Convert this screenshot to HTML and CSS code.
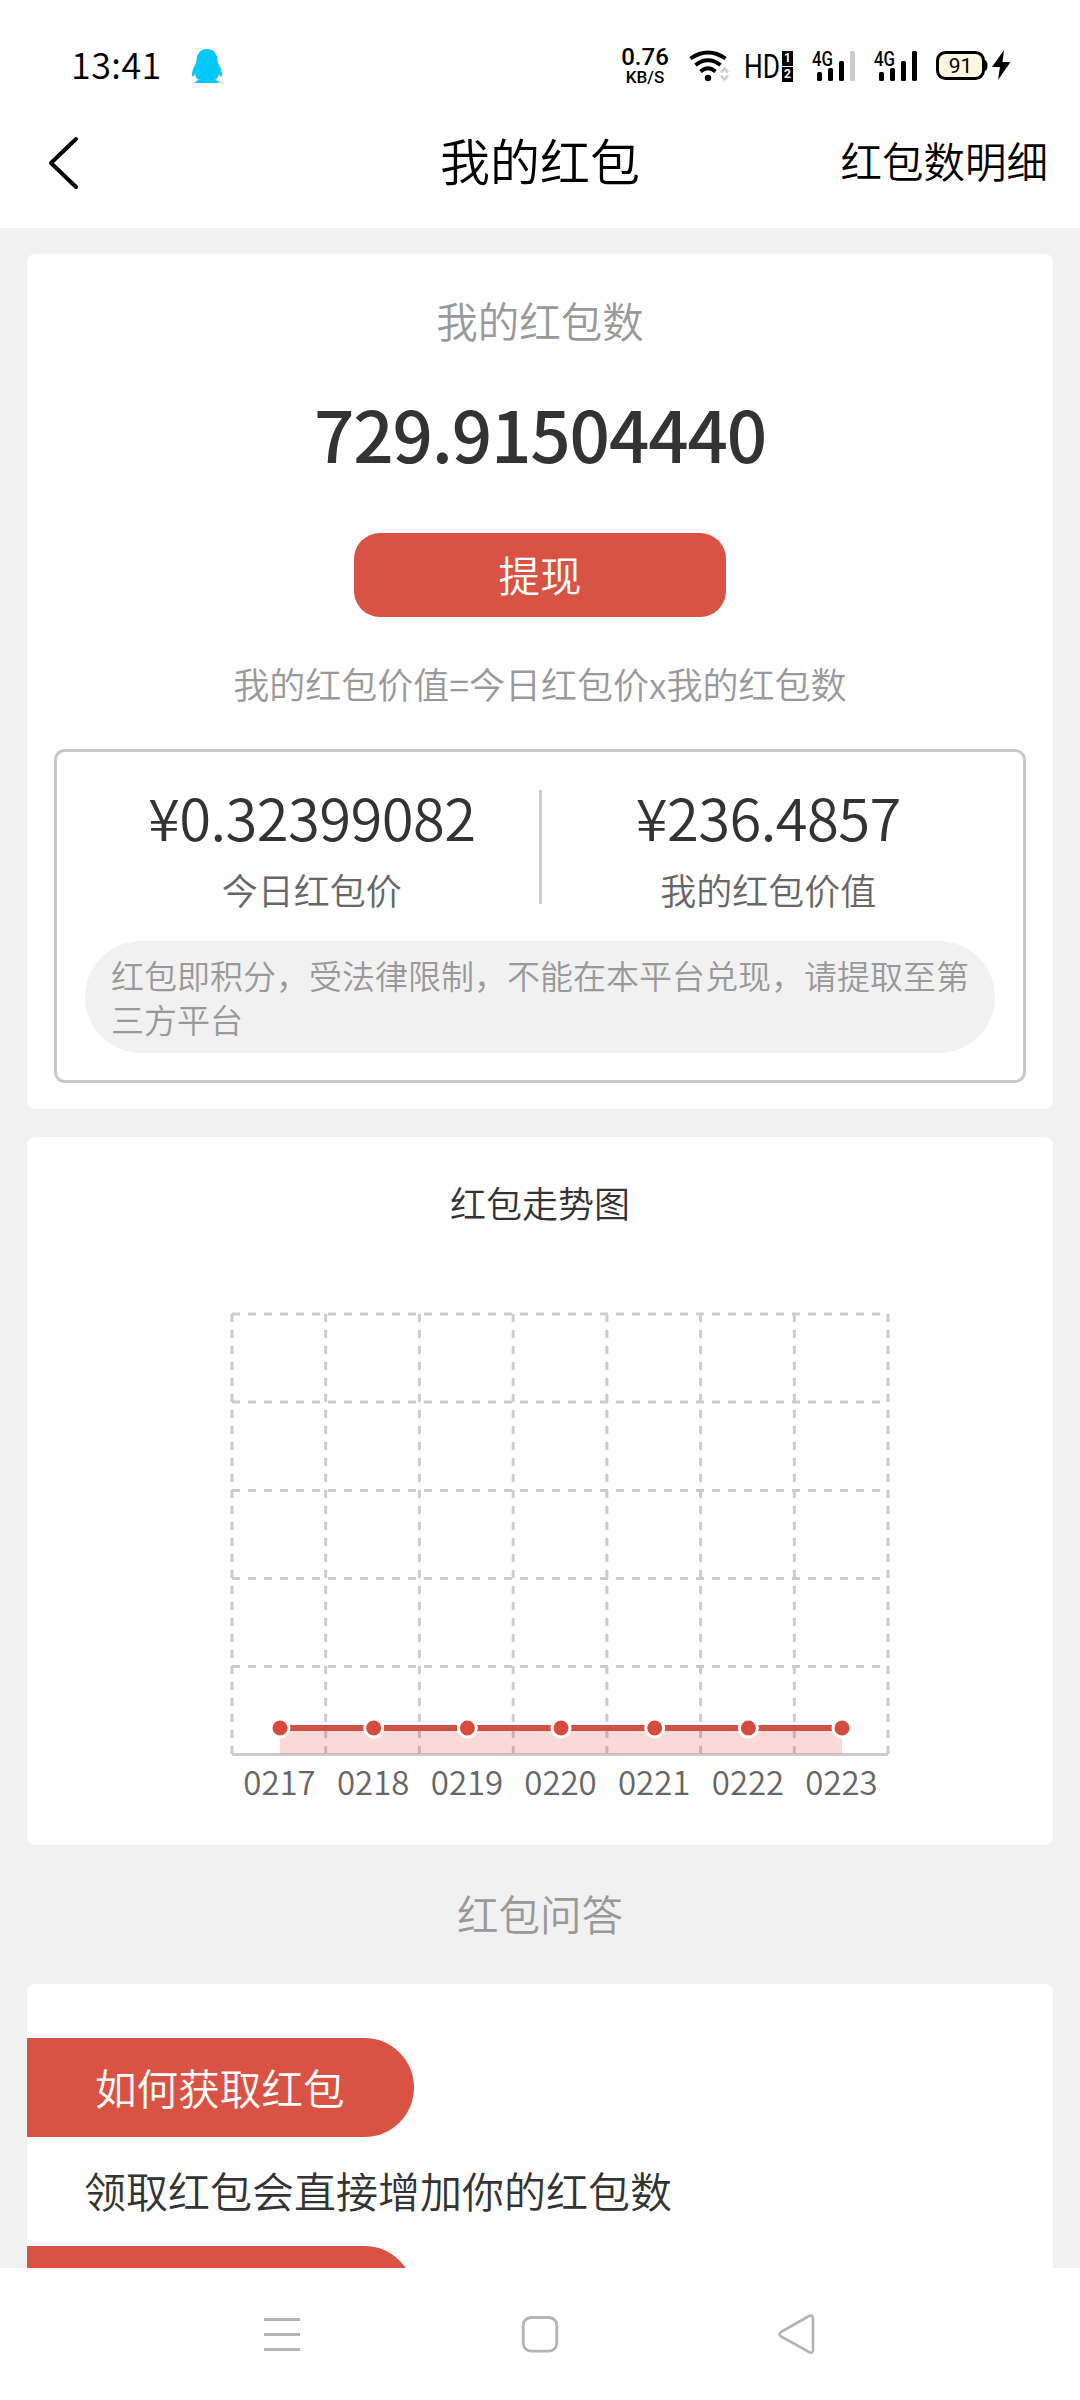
FILE: index.html
```html
<!DOCTYPE html>
<html lang="zh-CN">
<head>
    <meta charset="UTF-8">
    <meta name="viewport" content="width=device-width, initial-scale=1.0">
    <title>我的红包</title>
    <link rel="stylesheet" href="styles.css">
</head>
<body>
    <div class="status-bar">
        <span class="time">13:41</span>
        <svg class="qq" width="30" height="34" viewBox="0 0 30 34">
            <path fill="#00c8f8" d="M15 0C8 0 4.500 5 4.500 12C4.500 15 0 19 0 26C0.500 29 2 27 3 25C3.500 28 5 30 7 31C4 31.500 3 32.500 3 34H27C27 32.500 26 31.500 23 31C25 30 26.500 28 27 25C28 27 29.500 29 30 26C30 19 25.500 15 25.500 12C25.500 5 22 0 15 0Z"/>
        </svg>
        <div class="speed">
            <span class="speed-num">0.76</span>
            <span class="speed-unit">KB/S</span>
        </div>
        <svg class="wifi" width="40" height="32" viewBox="0 0 40 32">
            <g fill="none" stroke="#000" stroke-width="3.800">
                <path d="M1.500 8.500Q19 -3.500 36.500 8.500"/>
                <path d="M6.500 15Q19 5.500 31.500 15"/>
                <path d="M11.500 21.500Q19 15 26.500 21.500"/>
            </g>
            <circle cx="19" cy="28" r="3.200" fill="#000"/>
            <path d="M32 22.500L35.500 18.500L39 22.500M32 25.500L35.500 29.500L39 25.500" fill="none" stroke="#ccc" stroke-width="2.500"/>
        </svg>
        <div class="hd">
            <svg width="37" height="41" viewBox="0 -5 37 41">
                <text class="hd-text" x="0" y="27" textLength="36" lengthAdjust="spacingAndGlyphs">HD</text>
            </svg>
            <div class="sims"><span>1</span><span>2</span></div>
        </div>
        <svg class="signal" width="46" height="38" viewBox="0 -6 46 38">
            <text class="net" x="1" y="16" textLength="21" lengthAdjust="spacingAndGlyphs">4G</text>
            <g fill="#000">
                <rect x="6" y="22" width="5" height="9" rx="1.500"/>
                <rect x="17" y="18" width="5" height="13" rx="1.500"/>
                <rect x="28" y="11" width="5" height="20" rx="1.500"/>
            </g>
            <rect x="39" y="1" width="5" height="30" rx="1.500" fill="#ccc"/>
        </svg>
        <svg class="signal" width="46" height="38" viewBox="0 -6 46 38">
            <text class="net" x="1" y="16" textLength="21" lengthAdjust="spacingAndGlyphs">4G</text>
            <g fill="#000">
                <rect x="6" y="22" width="5" height="9" rx="1.500"/>
                <rect x="17" y="18" width="5" height="13" rx="1.500"/>
                <rect x="28" y="11" width="5" height="20" rx="1.500"/>
                <rect x="39" y="1" width="5" height="30" rx="1.500"/>
            </g>
        </svg>
        <svg class="battery" width="76" height="32" viewBox="0 0 76 32">
            <rect x="1.500" y="3.500" width="46" height="26" rx="8" fill="#fbf7de" stroke="#000" stroke-width="3"/>
            <path d="M49 11Q51.500 12 51.500 16.500T49 22Z" fill="#000"/>
            <text class="level" x="24.500" y="23.500" text-anchor="middle">91</text>
            <path d="M68 1L56 18H64L62 31L74.500 13H66.500Z" fill="#000"/>
        </svg>
    </div>

    <div class="header">
        <svg class="back" width="36" height="56" viewBox="0 0 36 56">
            <path d="M30 4L5 28L30 52" fill="none" stroke="#000" stroke-width="4" stroke-linecap="round" stroke-linejoin="round"/>
        </svg>
        <div class="header-title">我的红包</div>
        <div class="header-link">红包数明细</div>
    </div>

    <div class="content">
        <div class="card summary">
            <div class="summary-label">我的红包数</div>
            <div class="summary-num">729.91504440</div>
            <div class="btn">提现</div>
            <div class="formula">我的红包价值=今日红包价x我的红包数</div>
            <div class="price-box">
                <div class="prices">
                    <div class="price">
                        <div class="price-num">¥0.32399082</div>
                        <div class="price-label">今日红包价</div>
                    </div>
                    <div class="divider"></div>
                    <div class="price">
                        <div class="price-num">¥236.4857</div>
                        <div class="price-label">我的红包价值</div>
                    </div>
                </div>
                <div class="tip">红包即积分，受法律限制，不能在本平台兑现，请提取至第三方平台</div>
            </div>
        </div>

        <div class="card trend">
            <div class="trend-title">红包走势图</div>
            <svg class="chart" width="680" height="500" viewBox="220 1305 680 500">
                <!-- grid -->
                <g fill="none" stroke="#ccc" stroke-width="3" stroke-dasharray="8 8">
                    <path d="M232 1314H888M232 1402H888M232 1490.500H888M232 1578.500H888M232 1666.500H888"/>
                    <path d="M232 1314V1754M325.700 1314V1754M419.400 1314V1754M513.200 1314V1754M606.900 1314V1754M700.600 1314V1754M794.300 1314V1754M888 1314V1754"/>
                </g>
                <path d="M232 1754.500H888" stroke="#ccc" stroke-width="3"/>
                <!-- data -->
                <path d="M280 1728H842V1754H280Z" fill="#e64340" fill-opacity="0.2"/>
                <path d="M280 1728H842" stroke="#cf5244" stroke-width="6"/>
                <g fill="#d94a3e" stroke="#fff" stroke-width="3">
                    <circle cx="280" cy="1728" r="9"/>
                    <circle cx="373.700" cy="1728" r="9"/>
                    <circle cx="467.400" cy="1728" r="9"/>
                    <circle cx="561" cy="1728" r="9"/>
                    <circle cx="654.700" cy="1728" r="9"/>
                    <circle cx="748.400" cy="1728" r="9"/>
                    <circle cx="842" cy="1728" r="9"/>
                </g>
                <g class="axis">
                    <text x="279.500" y="1795">0217</text>
                    <text x="373.200" y="1795">0218</text>
                    <text x="467" y="1795">0219</text>
                    <text x="560.500" y="1795">0220</text>
                    <text x="654.200" y="1795">0221</text>
                    <text x="748" y="1795">0222</text>
                    <text x="841.500" y="1795">0223</text>
                </g>
            </svg>
        </div>

        <div class="qa-title">红包问答</div>

        <div class="card qa">
            <div class="tag">如何获取红包</div>
            <div class="answer">领取红包会直接增加你的红包数</div>
            <div class="tag"></div>
        </div>
    </div>

    <div class="nav-bar">
        <svg width="40" height="44" viewBox="0 0 40 44">
            <path d="M2 7.500H38M2 22.500H38M2 37.500H38" stroke="#b4b4b4" stroke-width="2.800"/>
        </svg>
        <svg width="40" height="44" viewBox="0 0 40 44">
            <rect x="3.200" y="5.500" width="33.600" height="33.600" rx="8" fill="none" stroke="#b4b4b4" stroke-width="2.800"/>
        </svg>
        <svg width="40" height="44" viewBox="0 0 40 44">
            <path d="M4 20L32 4Q36 2.500 36 6.500V38Q36 42 32 40L4 24.500Q1 22 4 20Z" fill="none" stroke="#b4b4b4" stroke-width="2.600"/>
        </svg>
    </div>
</body>
</html>
```
FILE: styles.css
```css
* {
    box-sizing: border-box;
}

body, html {
    margin: 0;
    padding: 0;
}

body {
    width: 1080px;
    height: 2400px;
    display: flex;
    flex-direction: column;
    overflow: hidden;
    background: #fff;
    color: #333;
    font-family: 'Noto Sans CJK SC', sans-serif;
    font-weight: 350;
}

svg {
    display: block;
    flex-shrink: 0;
}

.status-bar {
    height: 98px;
    display: flex;
    align-items: flex-start;
    color: #000;
}

.time {
    width: 121px;
    margin: 38px 0 0 71px;
    line-height: 50px;
    font-size: 36px;
    letter-spacing: 0.400px;
}

.qq {
    margin-top: 49px;
}

.speed {
    width: 60px;
    margin: 46px 0 0 393px;
    display: flex;
    flex-direction: column;
    align-items: center;
    font-family: Roboto, sans-serif;
    font-weight: 500;
}

.speed-num {
    font-size: 24px;
    line-height: 22px;
}

.speed-unit {
    font-size: 17px;
    line-height: 18px;
}

.wifi {
    margin: 50px 0 0 14px;
}

.hd {
    margin: 46px 0 0 15px;
    display: flex;
    gap: 1px;
}

.hd-text {
    font: 400 33px Roboto, sans-serif;
}

.sims {
    display: flex;
    flex-direction: column;
    gap: 1px;
    padding-top: 5px;
}

.sims span {
    width: 11px;
    height: 15px;
    background: #000;
    color: #fff;
    font: 700 12px/15px Roboto, sans-serif;
    text-align: center;
}

.signal {
    margin: 44px 0 0 16px;
}

.hd + .signal {
    margin-left: 18px;
}

.net {
    font: 500 20px Roboto, sans-serif;
}

.battery {
    margin: 49px 0 0 17px;
}

.level {
    font: 400 21px Roboto, sans-serif;
}

.header {
    height: 130px;
    display: grid;
    grid-template-columns: 1fr auto 1fr;
    align-items: center;
    color: #000;
}

.back {
    margin-left: 46px;
}

.header-title {
    margin-top: -9px;
    font-size: 50px;
    line-height: 60px;
}

.header-link {
    padding-right: 32px;
    margin-top: -7px;
    font-size: 41.500px;
    line-height: 60px;
    text-align: right;
}

.content {
    height: 2040px;
    padding: 26px 27px 0;
    overflow: hidden;
    background: #f1f1f1;
}

.card {
    background: #fff;
    border-radius: 8px;
}

.summary {
    height: 855px;
    padding: 36px 27px 0;
    text-align: center;
}

.summary-label {
    font-size: 41.500px;
    line-height: 60px;
    color: #999;
}

.summary-num {
    margin-top: 32px;
    font-size: 71px;
    line-height: 100px;
    font-weight: 500;
    letter-spacing: -1.200px;
}

.btn {
    width: 372px;
    height: 84px;
    margin: 51px auto 0;
    border-radius: 26px;
    background: #d95345;
    color: #fff;
    font-size: 41.500px;
    line-height: 82px;
}

.formula {
    margin-top: 41px;
    font-size: 36px;
    line-height: 50px;
    color: #999;
}

.price-box {
    height: 334px;
    margin-top: 41px;
    border: 3px solid #c8c8c8;
    border-radius: 11px;
    padding: 28px 28px 0;
}

.prices {
    display: flex;
    align-items: center;
}

.price {
    flex: 1;
}

.price-num {
    margin-top: -2px;
    font-size: 58px;
    line-height: 76px;
    letter-spacing: -0.600px;
}

.price-label {
    margin-top: 10px;
    font-size: 36px;
    line-height: 50px;
    color: #666;
}

.divider {
    width: 3px;
    height: 114px;
    background: #ccc;
}

.tip {
    height: 112px;
    margin-top: 27px;
    padding: 12px 26px 0;
    border-radius: 56px;
    background: #f1f1f1;
    font-size: 33px;
    line-height: 44px;
    text-align: left;
    color: #999;
}

.trend {
    height: 708px;
    margin-top: 28px;
    padding-top: 40px;
}

.trend-title {
    font-size: 36px;
    line-height: 50px;
    text-align: center;
}

.chart {
    margin: 78px 0 0 193px;
}

.axis text {
    font-size: 33px;
    fill: #666;
    text-anchor: middle;
}

.qa-title {
    height: 139px;
    line-height: 137px;
    font-size: 41.500px;
    text-align: center;
    color: #999;
}

.qa {
    height: 500px;
    padding-top: 54px;
}

.tag {
    width: 387px;
    height: 99px;
    padding-left: 68px;
    border-radius: 0 50px 50px 0;
    background: #d95345;
    color: #fff;
    font-size: 41.600px;
    line-height: 98px;
}

.answer {
    height: 109px;
    padding-left: 57px;
    font-size: 42px;
    line-height: 106px;
}

.nav-bar {
    height: 132px;
    display: flex;
    justify-content: space-between;
    padding: 44px 263px 0 262px;
}
```
